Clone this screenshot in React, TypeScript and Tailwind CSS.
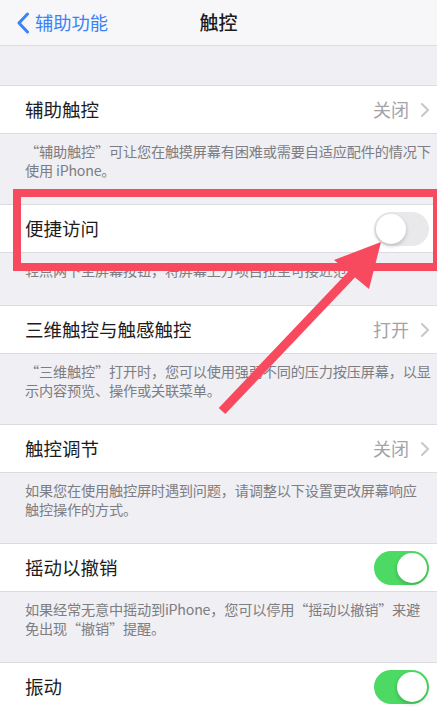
import React from "react";

const font = {
  fontFamily: '"Noto Sans CJK SC", "Noto Sans", sans-serif',
};

function Chevron() {
  return (
    <svg width="8" height="14" viewBox="0 0 8 14" className="ml-[12px]">
      <path
        d="M1 1l6 6-6 6"
        fill="none"
        stroke="#c7c7cc"
        strokeWidth="2"
        strokeLinecap="round"
        strokeLinejoin="round"
      />
    </svg>
  );
}

function Toggle({ on }: { on: boolean }) {
  return (
    <div
      className={
        on
          ? "flex h-[34px] w-[55px] items-center justify-end rounded-full bg-[#4cd964] p-[2px]"
          : "flex h-[34px] w-[55px] items-center justify-start rounded-full bg-[#e9e9eb] p-[2px]"
      }
    >
      <div className="h-[30px] w-[30px] rounded-full bg-white shadow-[0_2px_4px_rgba(0,0,0,0.2)]" />
    </div>
  );
}

function Row({
  title,
  value,
  toggle,
}: {
  title: string;
  value?: string;
  toggle?: boolean;
}) {
  return (
    <div className="flex h-[49px] items-center justify-between border-y border-[#dcdce0] bg-white pl-[25px] pr-[8px]">
      <span className="text-[18.5px] text-[#1c1c1e]">{title}</span>
      {value !== undefined ? (
        <div className="flex items-center">
          <span className="text-[18px] text-[#a3a3a8]">{value}</span>
          <Chevron />
        </div>
      ) : (
        <Toggle on={!!toggle} />
      )}
    </div>
  );
}

function Footer({ children, h }: { children: React.ReactNode; h: string }) {
  return (
    <div
      className={`${h} pl-[25px] pr-[4px] pt-[8px] text-[14.2px] leading-[18.5px] tracking-[-0.2px] text-[#7d7d82]`}
    >
      {children}
    </div>
  );
}

export default function App() {
  return (
    <div
      className="relative h-[707px] w-[437px] overflow-hidden bg-[#efeff4]"
      style={font}
    >
      {/* nav bar */}
      <div className="relative flex h-[46px] items-center border-b border-[#dcdce0] bg-[#f7f7f9]">
        <div className="flex items-center pl-[16px] text-[18.3px] text-[#3a82f7]">
          <svg width="14" height="22" viewBox="0 0 14 22">
            <path
              d="M11.5 2L3 11l8.5 9"
              fill="none"
              stroke="#3a82f7"
              strokeWidth="3"
              strokeLinecap="round"
              strokeLinejoin="round"
            />
          </svg>
          <span className="ml-[5px]">辅助功能</span>
        </div>
        <span className="absolute left-1/2 -translate-x-1/2 text-[19px] font-medium text-[#1c1c1e]">
          触控
        </span>
      </div>

      <div className="h-[39px]" />
      <Row title="辅助触控" value="关闭" />
      <Footer h="h-[70px]">
        “辅助触控”可让您在触摸屏幕有困难或需要自适应配件的情况下使用 iPhone。
      </Footer>
      <Row title="便捷访问" toggle={false} />
      <Footer h="h-[52px]">轻点两下主屏幕按钮，将屏幕上方项目拉至可接近范围。</Footer>
      <Row title="三维触控与触感触控" value="打开" />
      <Footer h="h-[70px]">
        “三维触控”打开时，您可以使用强弱不同的压力按压屏幕，以显示内容预览、操作或关联菜单。
      </Footer>
      <Row title="触控调节" value="关闭" />
      <Footer h="h-[70px]">
        如果您在使用触控屏时遇到问题，请调整以下设置更改屏幕响应
        <br />
        触控操作的方式。
      </Footer>
      <Row title="摇动以撤销" toggle />
      <Footer h="h-[70px]">
        如果经常无意中摇动到iPhone，您可以停用“摇动以撤销”来避免出现“撤销”提醒。
      </Footer>
      <Row title="振动" toggle />

      {/* annotation overlay */}
      <div className="absolute left-[13px] top-[189px] h-[82px] w-[428px] border-[8px] border-[#f84a5f]" />
      <svg
        className="absolute left-0 top-0"
        width="437"
        height="707"
        viewBox="0 0 437 707"
      >
        <line
          x1="222"
          y1="411"
          x2="354"
          y2="272"
          stroke="#f84a5f"
          strokeWidth="9"
        />
        <polygon points="381,242 334,260 369,289" fill="#f84a5f" />
      </svg>
    </div>
  );
}
